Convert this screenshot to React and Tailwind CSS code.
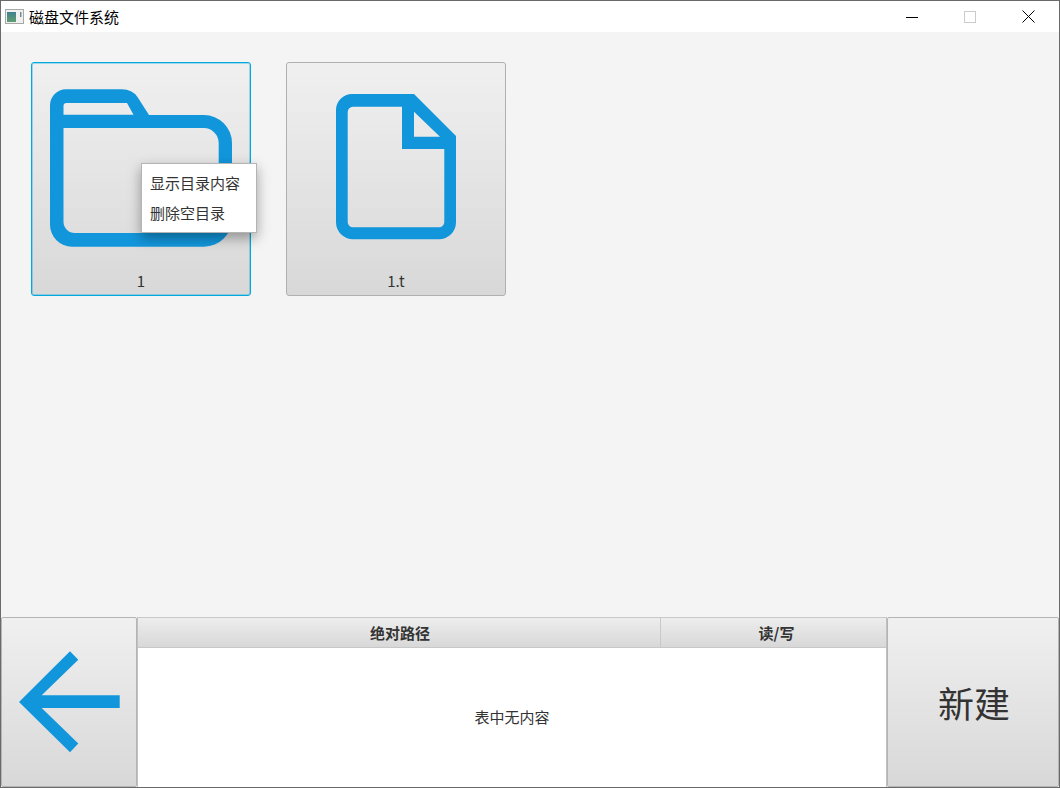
const font = { fontFamily: '"Noto Sans CJK SC", sans-serif' };

function FolderIcon() {
  return (
    <svg width="220" height="234" viewBox="31 62 220 234" className="absolute left-[-1px] top-[-1px]">
      <path
        fillRule="evenodd"
        fill="#1296db"
        d="M66 89.3H122Q132 89.3 137.5 97L149 115H204A28 28 0 0 1 232 143V218.7A28 28 0 0 1 204 246.7H72A22 22 0 0 1 50 224.7V105.3A16 16 0 0 1 66 89.3ZM66.5 103Q63.5 103 63.5 106V114.7H133.5L127 103ZM63.5 128V221.7A11.3 11.3 0 0 0 74.8 233H207A11.7 11.7 0 0 0 218.7 221.3V143A15 15 0 0 0 203.7 128Z"
      />
    </svg>
  );
}

function FileIcon() {
  return (
    <svg width="220" height="234" viewBox="286 62 220 234" className="absolute left-[-1px] top-[-1px]">
      <path
        fillRule="evenodd"
        fill="#1296db"
        d="M352 94H414L456 136V222.3A17 17 0 0 1 439 239.3H353A17 17 0 0 1 336 222.3V110A16 16 0 0 1 352 94ZM353 106.7A5.3 5.3 0 0 0 347.7 112V222A5.3 5.3 0 0 0 353 227.3H439A5.3 5.3 0 0 0 444.3 222V149H402V106.7ZM414 111.7V136.7H440Z"
      />
    </svg>
  );
}

function Tile({ label, focused, children }) {
  return (
    <div
      className={
        "relative w-[220px] h-[234px] rounded-[3px] border bg-gradient-to-b from-[#f0f0f0] to-[#d8d8d8] " +
        (focused
          ? "border-[#03a9dc] shadow-[inset_0_0_0_1px_rgba(3,169,220,0.35)]"
          : "border-[#b0b0b0]")
      }
    >
      {children}
      <div className="absolute left-0 right-0 bottom-[4px] text-center text-[15px] leading-[20px] text-[#333333]">
        {label}
      </div>
    </div>
  );
}

function ArrowIcon() {
  return (
    <svg width="136" height="170" viewBox="1 617 136 170" className="absolute left-[-1px] top-[-1px]">
      <polygon
        fill="#1296db"
        points="19,702 70,651.3 78.3,659.7 41.7,695.3 119.7,695.3 119.7,708 41.7,708 78.3,743.5 70,752.3"
      />
    </svg>
  );
}

export default function App() {
  return (
    <div style={font} className="w-[1060px] h-[788px] flex flex-col border border-[#6a6a6a] bg-[#f4f4f4] overflow-hidden">
      <div className="h-[31px] shrink-0 flex items-center bg-white">
        <svg width="20" height="16" viewBox="0 0 20 16" className="ml-[4px]">
          <rect x="0.5" y="0.5" width="18" height="14" fill="#f0f0f0" stroke="#a8a8a8" />
          <defs>
            <linearGradient id="ic" x1="0" y1="0" x2="0" y2="1">
              <stop offset="0" stopColor="#3f7f8f" />
              <stop offset="1" stopColor="#5f9f6f" />
            </linearGradient>
          </defs>
          <rect x="2" y="3" width="9" height="10" fill="url(#ic)" />
          <rect x="15" y="3" width="1.5" height="5" fill="#6f8f8f" />
        </svg>
        <span className="ml-[4px] text-[15px] leading-[20px] text-black">磁盘文件系统</span>
        <div className="ml-auto flex items-center">
          <svg width="12" height="12" viewBox="0 0 12 12" className="mr-[46px]">
            <path d="M0 6.5H12" stroke="#000" strokeWidth="1" />
          </svg>
          <svg width="12" height="12" viewBox="0 0 12 12" className="mr-[46px]">
            <rect x="0.5" y="0.5" width="11" height="11" fill="none" stroke="#cccccc" />
          </svg>
          <svg width="13" height="13" viewBox="0 0 13 13" className="mr-[24px]">
            <path d="M0.5 0.5L12.5 12.5M12.5 0.5L0.5 12.5" stroke="#000" strokeWidth="1" />
          </svg>
        </div>
      </div>

      <div className="relative flex-1 flex items-start gap-[35px] pl-[30px] pt-[30px]">
        <Tile label="1" focused>
          <FolderIcon />
        </Tile>
        <Tile label="1.t">
          <FileIcon />
        </Tile>
        <div className="absolute left-[140px] top-[131px] w-[116px] h-[70px] bg-white border border-[#b4b4b4] shadow-[0_5px_12px_rgba(0,0,0,0.35)] pl-[8px] pt-[4px] text-[15px] leading-[30px] text-[#333333]">
          <div>显示目录内容</div>
          <div>删除空目录</div>
        </div>
      </div>

      <div className="h-[170px] shrink-0 flex">
        <div className="relative w-[136px] rounded-[2px] border border-[#b4b4b4] bg-gradient-to-b from-[#f0f0f0] to-[#d8d8d8]">
          <ArrowIcon />
        </div>
        <div className="w-[750px] flex flex-col bg-white border-x border-[#c0c0c0]">
          <div className="h-[31px] shrink-0 flex border-y border-[#c8c8c8] bg-gradient-to-b from-[#ededed] to-[#d8d8d8] text-[15px] font-bold text-[#333333] leading-[29px]">
            <div className="w-[523px] text-center border-r border-[#c8c8c8] pl-[2px]">绝对路径</div>
            <div className="flex-1 text-center pl-[6px]">读/写</div>
          </div>
          <div className="flex-1 flex items-center justify-center text-[15px] text-[#333333]">表中无内容</div>
        </div>
        <div className="flex-1 flex items-center justify-center rounded-[2px] border border-[#b4b4b4] bg-gradient-to-b from-[#f0f0f0] to-[#d8d8d8] text-[36px] text-[#333333] pl-[2px]">
          新建
        </div>
      </div>
    </div>
  );
}
